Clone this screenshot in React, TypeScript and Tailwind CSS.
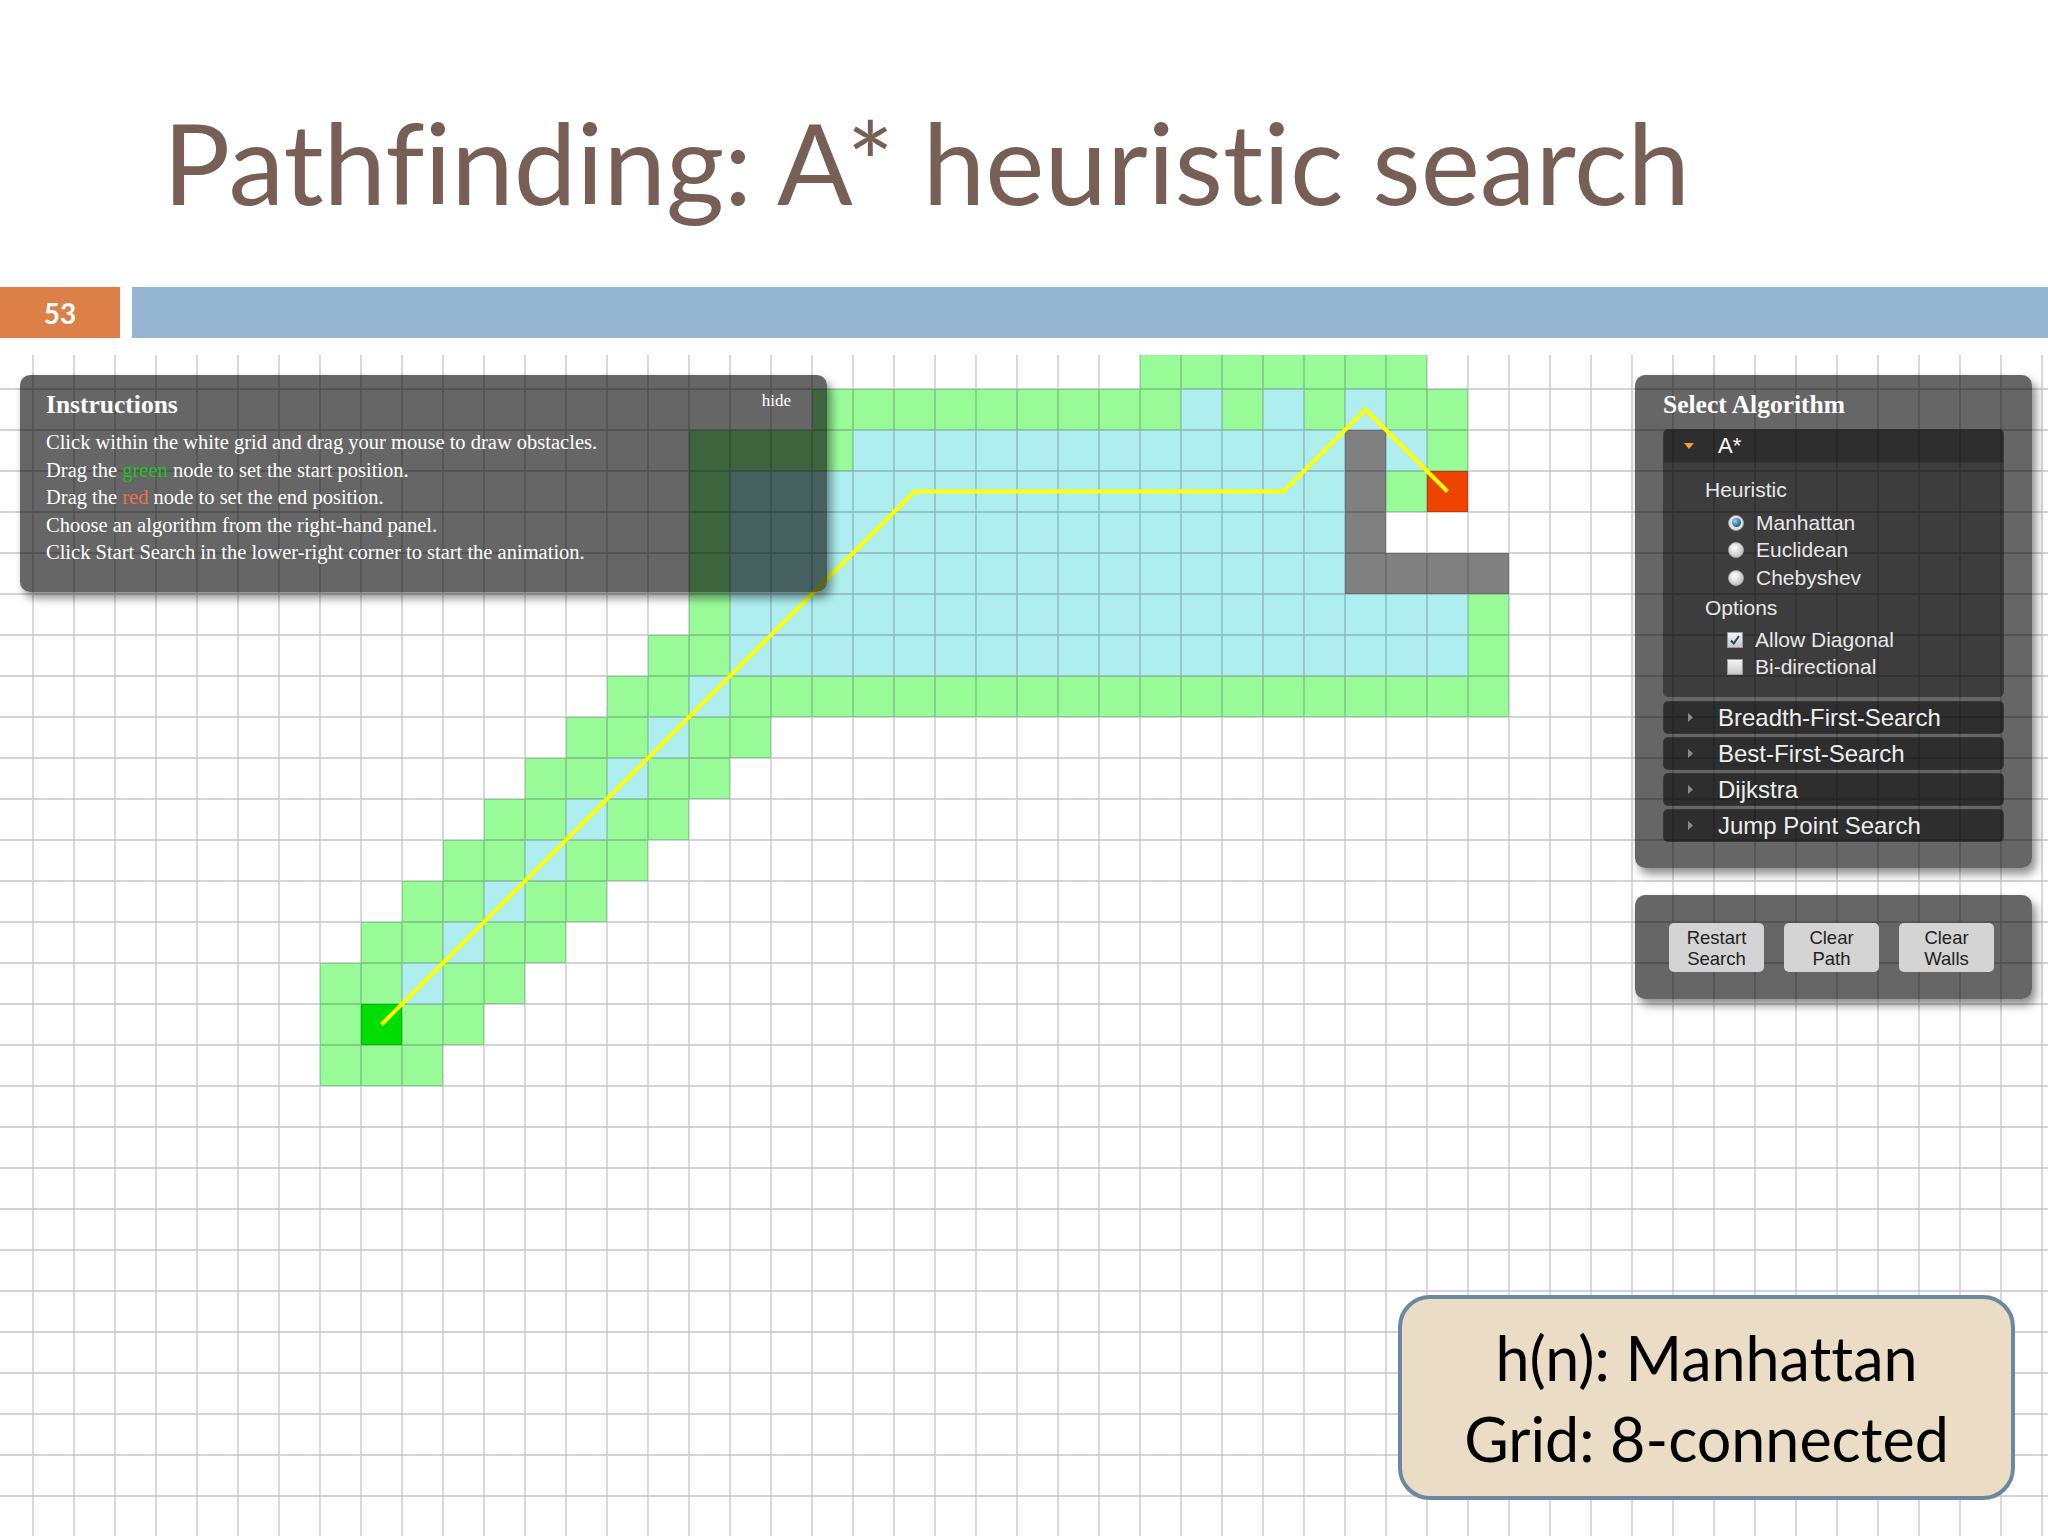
import React from 'react';

// grid geometry (px), measured from the screenshot
const CELL = 41;
const OX = -8;
const OY = -7;
const COLS = 51;
const ROWS = 30;
const GRID_H = 1181;

type Run = [number, number, number]; // row, fromCol, toCol

const OPEN: Run[] = [
    [0, 28, 34],
    [1, 20, 28], [1, 30, 30], [1, 32, 32], [1, 34, 35],
    [2, 17, 20], [2, 35, 35],
    [3, 17, 17], [3, 34, 34],
    [4, 17, 17], [5, 17, 17],
    [6, 17, 17], [6, 36, 36],
    [7, 16, 17], [7, 36, 36],
    [8, 15, 16], [8, 18, 36],
    [16, 8, 8], [16, 10, 11],
    [17, 8, 10],
];
for (let r = 9; r <= 15; r++) OPEN.push([r, 23 - r, 24 - r], [r, 26 - r, 27 - r]);

const CLOSED: Run[] = [
    [1, 29, 29], [1, 31, 31], [1, 33, 33],
    [2, 21, 32], [2, 34, 34],
    [3, 18, 32], [4, 18, 32], [5, 18, 32],
    [6, 18, 35], [7, 18, 35],
];
for (let r = 8; r <= 15; r++) CLOSED.push([r, 25 - r, 25 - r]);

const WALLS: Run[] = [[2, 33, 33], [3, 33, 33], [4, 33, 33], [5, 33, 36]];

const PATH = [[9, 16], [22, 3], [31, 3], [33, 1], [35, 3]];

const center = (c: number, r: number) => `${OX + c * CELL + CELL / 2},${OY + r * CELL + CELL / 2}`;

function GridCanvas() {
    const rect = (run: Run, fill: string, key: string) => {
        const [r, a, b] = run;
        return <rect key={key} x={OX + a * CELL} y={OY + r * CELL} width={(b - a + 1) * CELL} height={CELL} fill={fill} />;
    };
    let lines = '';
    for (let c = 0; c <= COLS; c++) lines += `M${OX + c * CELL} 0V${GRID_H}`;
    for (let r = 1; r <= ROWS; r++) lines += `M0 ${OY + r * CELL}H2048`;

    return (
        <svg width="2048" height={GRID_H} className="block">
            <rect width="2048" height={GRID_H} fill="#fff" />
            {OPEN.map((r, i) => rect(r, '#98fb98', 'o' + i))}
            {CLOSED.map((r, i) => rect(r, '#afeeee', 'c' + i))}
            {WALLS.map((r, i) => rect(r, '#808080', 'w' + i))}
            {rect([16, 9, 9], '#00dd00', 'start')}
            {rect([3, 35, 35], '#ee4400', 'end')}
            <path d={lines} stroke="rgba(10,10,40,0.24)" strokeWidth="1.3" fill="none" />
            <polyline points={PATH.map(([c, r]) => center(c, r)).join(' ')} fill="none" stroke="#ffff00" strokeWidth="4" />
        </svg>
    );
}

function InstructionsPanel() {
    return (
        <div className="absolute left-[20px] top-[20px] w-[807px] h-[217px] rounded-[10px] bg-black/60 shadow-[4px_6px_10px_rgba(0,0,0,0.45)] pl-[26px] pr-[36px] pt-[15px] font-['Liberation_Serif',serif] text-white">
            <div className="flex justify-between items-start">
                <h2 className="text-[25.5px] leading-[29px] font-bold">Instructions</h2>
                <span className="text-[17px] leading-[20px] mt-[1px]">hide</span>
            </div>
            <div className="mt-[10px] text-[20.5px] leading-[27.5px]">
                <p>Click within the white grid and drag your mouse to draw obstacles.</p>
                <p>Drag the <span className="text-[#22c022]">green</span> node to set the start position.</p>
                <p>Drag the <span className="text-[#f0704f]">red</span> node to set the end position.</p>
                <p>Choose an algorithm from the right-hand panel.</p>
                <p>Click Start Search in the lower-right corner to start the animation.</p>
            </div>
        </div>
    );
}

function Radio({ checked }: { checked?: boolean }) {
    if (checked) {
        return (
            <span className="w-[16px] h-[16px] rounded-full bg-[#e4e4e4] border border-[#9a9a9a] flex items-center justify-center">
                <span className="w-[9px] h-[9px] rounded-full bg-[radial-gradient(circle_at_35%_35%,#8fd8fb,#17628c_70%)]" />
            </span>
        );
    }
    return <span className="w-[16px] h-[16px] rounded-full border border-[#a8a8a8] bg-[radial-gradient(circle_at_40%_35%,#ffffff,#c2c2c2_75%)]" />;
}

function Checkbox({ checked }: { checked?: boolean }) {
    return (
        <span className="w-[16px] h-[16px] border border-[#9a9a9a] bg-[linear-gradient(#f4f4f4,#c8c8c8)] flex items-center justify-center">
            {checked && (
                <svg width="12" height="12" viewBox="0 0 12 12">
                    <path d="M2 6.5l2.8 3L10 2" stroke="#2d3f78" strokeWidth="2" fill="none" />
                </svg>
            )}
        </span>
    );
}

const OTHER_ALGOS = ['Breadth-First-Search', 'Best-First-Search', 'Dijkstra', 'Jump Point Search'];

function AlgorithmPanel() {
    return (
        <div className="absolute left-[1635px] top-[20px] w-[397px] h-[493px] rounded-[10px] bg-black/60 shadow-[4px_6px_10px_rgba(0,0,0,0.45)] px-[28px] pt-[15px]">
            <h2 className="font-['Liberation_Serif',serif] font-bold text-[25.5px] leading-[29px] text-white">Select Algorithm</h2>
            <div className="mt-[10px]">
                <div className="h-[34px] rounded-t-[5px] bg-black/55 border border-white/5 flex items-center">
                    <span className="w-[54px] pl-[20px] flex">
                        <svg width="10" height="6" viewBox="0 0 10 6"><path d="M0 0H10L5 6Z" fill="#f0a030" /></svg>
                    </span>
                    <span className="text-[22px] leading-[34px] text-white">A*</span>
                </div>
                <div className="h-[234px] rounded-b-[5px] bg-black/40 pl-[42px] pt-[13px] text-[21px] leading-[27px] text-[#e8e8e8]">
                    <div>Heuristic</div>
                    <div className="mt-[6px] ml-[23px]">
                        <div className="flex items-center gap-[12px]"><Radio checked /><span>Manhattan</span></div>
                        <div className="flex items-center gap-[12px]"><Radio /><span>Euclidean</span></div>
                        <div className="flex items-center gap-[12px] mt-[1px]"><Radio /><span>Chebyshev</span></div>
                    </div>
                    <div className="mt-[3px]">Options</div>
                    <div className="mt-[5px] ml-[22px]">
                        <div className="flex items-center gap-[12px]"><Checkbox checked /><span>Allow Diagonal</span></div>
                        <div className="flex items-center gap-[12px]"><Checkbox /><span>Bi-directional</span></div>
                    </div>
                </div>
                <div className="mt-[4px] flex flex-col gap-[3px]">
                    {OTHER_ALGOS.map(name => (
                        <div key={name} className="h-[33px] rounded-[5px] bg-black/55 border border-white/5 flex items-center">
                            <span className="w-[54px] pl-[24px] flex">
                                <svg width="5" height="9" viewBox="0 0 5 9"><path d="M0 0L5 4.5L0 9Z" fill="#8a8a8a" /></svg>
                            </span>
                            <span className="text-[24px] leading-[33px] text-[#eeeeee]">{name}</span>
                        </div>
                    ))}
                </div>
            </div>
        </div>
    );
}

function ButtonsPanel() {
    const buttons = [['Restart', 'Search'], ['Clear', 'Path'], ['Clear', 'Walls']];
    return (
        <div className="absolute left-[1635px] top-[540px] w-[397px] h-[104px] rounded-[10px] bg-black/60 shadow-[4px_6px_10px_rgba(0,0,0,0.45)] pl-[34px] pt-[28px] flex gap-[20px] items-start">
            {buttons.map(([a, b]) => (
                <div key={a + b} className="w-[95px] h-[49px] rounded-[5px] bg-[#d4d4d4] text-[#222] text-[18.5px] leading-[21px] flex flex-col items-center justify-center">
                    <span>{a}</span>
                    <span>{b}</span>
                </div>
            ))}
        </div>
    );
}

function NoteBox() {
    return (
        <div className="absolute left-[1398px] top-[940px] w-[617px] h-[205px] rounded-[32px] border-[4px] border-[#6c87a1] bg-[#ebddc5] pt-[18px] text-center font-['Lato',sans-serif] text-[61px] leading-[81px] text-black [font-variant-ligatures:none]">
            <div>h(n): Manhattan</div>
            <div>Grid: 8-connected</div>
        </div>
    );
}

export default function App() {
    return (
        <div className="w-[2048px] h-[1536px] bg-white overflow-hidden flex flex-col font-['Liberation_Sans',Arial,sans-serif]">
            <div className="h-[287px] pl-[163px] pt-[106px]">
                <h1 className="font-['Lato',sans-serif] text-[112px] leading-none text-[#775f55] whitespace-nowrap [font-variant-ligatures:none]">Pathfinding: A* heuristic search</h1>
            </div>
            <div className="flex h-[51px] gap-[12px]">
                <div className="w-[120px] bg-[#dd8047] flex items-center justify-center text-white font-bold text-[28px] font-['Lato',sans-serif]">53</div>
                <div className="flex-1 bg-[#94b6d2]" />
            </div>
            <div className="relative mt-[17px] flex-1 overflow-hidden">
                <GridCanvas />
                <InstructionsPanel />
                <AlgorithmPanel />
                <ButtonsPanel />
                <NoteBox />
            </div>
        </div>
    );
}
